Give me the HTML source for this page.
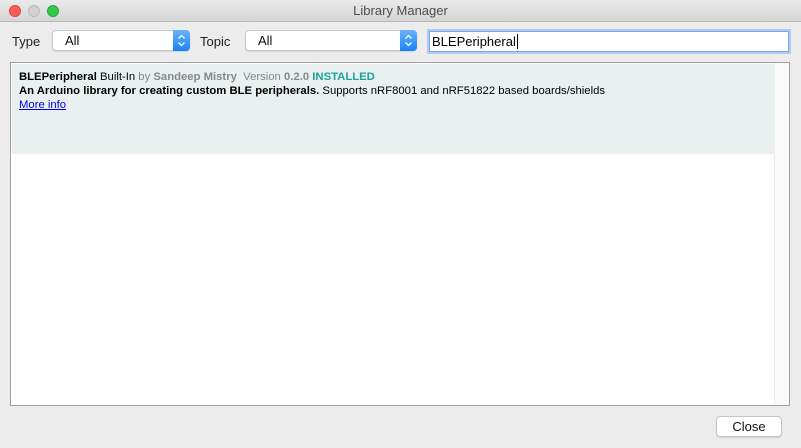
<!DOCTYPE html>
<html><head><style>
*{margin:0;padding:0;box-sizing:border-box}
body{width:801px;height:448px;background:#ececec;font-family:"Liberation Sans",sans-serif;position:relative;overflow:hidden}
.tb{position:absolute;left:0;top:0;width:801px;height:22px;background:linear-gradient(#ebebeb,#d5d5d5);border-bottom:1px solid #b9b9b9;text-align:center;font-size:13px;line-height:22px;color:#4d4d4d}
.dot{position:absolute;top:5px;width:12px;height:12px;border-radius:50%}
.lbl{position:absolute;font-size:13px;color:#222;top:34px}
.sel{position:absolute;top:30px;height:21px;background:#fff;border:1px solid #c8c8c8;border-radius:4px;font-size:13px;line-height:19px;padding-left:12px;color:#111;box-shadow:0 1px 1px rgba(0,0,0,.1)}
.st{position:absolute;right:-1px;top:-1px;width:17px;height:21px;background:linear-gradient(#6cb3fa,#1a82f7);border-radius:0 4px 4px 0}
.search{position:absolute;left:429px;top:31px;width:360px;height:21px;background:#fff;border:1px solid #7aa7e6;box-shadow:0 0 0 2px #aecbf3;font-size:13px;line-height:19px;padding-left:2px;color:#000}
.list{position:absolute;left:10px;top:62px;width:780px;height:344px;background:#fff;border:1px solid #a0a0a0}
.item{position:absolute;left:1px;top:1px;width:762px;height:90px;background:#eaf0f0;font-size:11.3px;padding:6px 7px;color:#000;line-height:14px}
.sb{position:absolute;right:0;top:0;width:15px;height:342px;background:#fafafa;border-left:1px solid #ececec}
.close{position:absolute;left:716px;top:416px;width:66px;height:21px;background:#fff;border:1px solid #c4c4c4;border-radius:4px;font-size:13px;text-align:center;line-height:19px;color:#111;box-shadow:0 1px 1px rgba(0,0,0,.12)}
</style></head><body>
<div class="tb">Library Manager
<div class="dot" style="left:9px;background:#fc5f57;border:1px solid #e0443e"></div>
<div class="dot" style="left:28px;background:#d0d0d0;border:1px solid #bbb"></div>
<div class="dot" style="left:47px;background:#34c84a;border:1px solid #25a83a"></div>
</div>
<div class="lbl" style="left:12px">Type</div>
<div class="sel" style="left:52px;width:138px">All<div class="st"><svg width="17" height="21" viewBox="0 0 17 21"><path d="M5.5 8.5l3-3 3 3M5.5 12.5l3 3 3-3" fill="none" stroke="#fff" stroke-width="1.3"/></svg></div></div>
<div class="lbl" style="left:200px">Topic</div>
<div class="sel" style="left:245px;width:172px">All<div class="st"><svg width="17" height="21" viewBox="0 0 17 21"><path d="M5.5 8.5l3-3 3 3M5.5 12.5l3 3 3-3" fill="none" stroke="#fff" stroke-width="1.3"/></svg></div></div>
<div class="search">BLEPeripheral<span style="border-left:1px solid #000;margin-left:1px"></span></div>
<div class="list">
<div class="item"><b>BLEPeripheral</b> Built-In <span style="color:#888">by</span> <b style="color:#888">Sandeep Mistry</b> &nbsp;<span style="color:#888">Version</span> <b style="color:#888">0.2.0</b> <b style="color:#1aa39a">INSTALLED</b><br><b>An Arduino library for creating custom BLE peripherals.</b> Supports nRF8001 and nRF51822 based boards/shields<br><span style="color:#00e;text-decoration:underline">More info</span></div>
<div class="sb"></div>
</div>
<div class="close">Close</div>
</body></html>
